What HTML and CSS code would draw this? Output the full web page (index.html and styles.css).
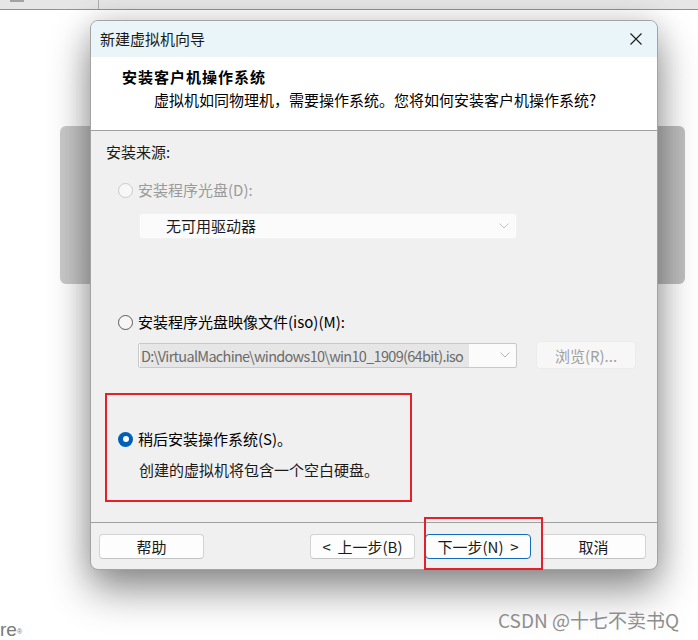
FILE: index.html
```html
<!DOCTYPE html>
<html lang="zh-CN">
<head>
<meta charset="utf-8">
<title>新建虚拟机向导</title>
<link rel="stylesheet" href="styles.css">
</head>
<body>
<div class="app">
  <div class="topbar"><span class="tb-handle"></span><span class="tb-divider"></span></div>
  <div class="stage"><div class="panel"></div></div>
  <div class="brand">re<span class="reg">®</span></div>
</div>

<div class="dialog">
  <div class="titlebar">
    <span class="title">新建虚拟机向导</span>
    <svg class="close" width="12" height="12" viewBox="0 0 12 12"><path d="M0.5 0.5 L11.5 11.5 M11.5 0.5 L0.5 11.5" stroke="#1a1a1a" stroke-width="1.1" fill="none"/></svg>
  </div>
  <div class="header">
    <div class="h-title">安装客户机操作系统</div>
    <div class="h-sub">虚拟机如同物理机，需要操作系统。您将如何安装客户机操作系统?</div>
  </div>
  <div class="body">
    <div class="label">安装来源:</div>
    <div class="radio-row r1">
      <span class="radio disabled"></span><span class="muted">安装程序光盘(D):</span>
    </div>
    <div class="select">
      <span>无可用驱动器</span>
      <svg width="10" height="6" viewBox="0 0 10 6"><path d="M0.5 0.5 L5 5 L9.5 0.5" stroke="#c4c4c4" fill="none"/></svg>
    </div>
    <div class="radio-row r2">
      <span class="radio off"></span><span>安装程序光盘映像文件(iso)(M):</span>
    </div>
    <div class="iso-row">
      <div class="iso-input">
        <span class="sel">D:\VirtualMachine\windows10\win10_1909(64bit).iso</span>
        <svg width="10" height="6" viewBox="0 0 10 6"><path d="M0.5 0.5 L5 5 L9.5 0.5" stroke="#b4b4b4" fill="none"/></svg>
      </div>
      <div class="browse">浏览(R)...</div>
    </div>
    <div class="mark">
      <div class="radio-row">
        <span class="radio on"></span><span>稍后安装操作系统(S)。</span>
      </div>
      <div class="note">创建的虚拟机将包含一个空白硬盘。</div>
    </div>
  </div>
  <div class="footer">
    <div class="btn w105">帮助</div>
    <div class="btn-group">
      <div class="btn w105">&lt;&nbsp; 上一步(B)</div>
      <div class="btn w106 primary">下一步(N)&nbsp; &gt;</div>
      <div class="btn w105">取消</div>
    </div>
  </div>
  <div class="mark2"></div>
</div>

<div class="watermark">CSDN @十七不卖书Q</div>
</body>
</html>
```

FILE: styles.css
```css
html, body {
  margin: 0;
  padding: 0;
  background: #ffffff;
  width: 698px;
  height: 640px;
  overflow: hidden;
  font-family: "Noto Sans CJK SC", "Noto Sans", sans-serif;
}

.app {
  display: flex;
  flex-direction: column;
  height: 640px;
}

.topbar {
  height: 9px;
  background: #e6e6e6;
  border-bottom: 1px solid #6d9cc3;
  display: flex;
  flex-shrink: 0;
}
.tb-handle {
  width: 14px;
  height: 2px;
  margin-left: 10px;
  background: #a2a2a2;
}
.tb-divider {
  width: 1px;
  height: 9px;
  margin-left: 74px;
  background: #b0b0b0;
}

.stage {
  padding: 116px 0 0 60px;
  flex-shrink: 0;
}
.panel {
  width: 625px;
  height: 158px;
  border-radius: 6px;
  background: linear-gradient(to right, #cacaca, #c0c0c0);
}

.brand {
  margin-top: auto;
  margin-bottom: 1px;
  height: 18px;
  font-family: "Liberation Sans", sans-serif;
  font-size: 19px;
  line-height: 18px;
  color: #7a7a7a;
}
.brand .reg {
  font-size: 7px;
  vertical-align: top;
  position: relative;
  top: 2px;
}

/* dialog window */
.dialog {
  position: absolute;
  left: 90px;
  top: 20px;
  width: 568px;
  height: 550px;
  box-sizing: border-box;
  border: 1px solid #a3a3a3;
  border-radius: 8px;
  background: #f0f0f0;
  display: flex;
  flex-direction: column;
  box-shadow: 0 20px 40px rgba(0, 0, 0, 0.44), 0 0 28px rgba(0, 0, 0, 0.12);
  font-size: 15px;
  color: #000;
}

.titlebar {
  height: 36px;
  flex-shrink: 0;
  background: #e9f5f8;
  border-radius: 7px 7px 0 0;
  display: flex;
  align-items: center;
  justify-content: space-between;
  padding: 0 15px 0 9px;
}
.title {
  line-height: 20px;
  color: #1a1a1a;
}
.close { display: block; }

.header {
  height: 63px;
  flex-shrink: 0;
  background: #ffffff;
  border-bottom: 1px solid #a0a0a0;
  padding: 10px 0 0 31px;
}
.h-title {
  font-weight: bold;
  letter-spacing: 1px;
  line-height: 20px;
}
.h-sub {
  margin: 3px 0 0 32px;
  line-height: 20px;
}

.body {
  height: 380px;
  flex-shrink: 0;
  padding: 11px 0 0 15px;
  border-bottom: 1px solid #a0a0a0;
  display: flex;
  flex-direction: column;
  align-items: flex-start;
}
.label {
  line-height: 20px;
  color: #1a1a1a;
}

.radio-row {
  display: flex;
  align-items: center;
  height: 20px;
  line-height: 20px;
  gap: 5px;
  margin-left: 12px;
}
.r1 { margin-top: 18px; }
.r2 { margin-top: 73px; }

.radio {
  width: 15px;
  height: 15px;
  box-sizing: border-box;
  border-radius: 50%;
  flex-shrink: 0;
}
.radio.disabled {
  border: 1px solid #cacaca;
  background: #f7f7f7;
}
.radio.off {
  border: 1px solid #5a5a5a;
  background: #f6f6f6;
}
.radio.on {
  background: #005fb8;
  display: flex;
  align-items: center;
  justify-content: center;
}
.radio.on::after {
  content: "";
  width: 6px;
  height: 6px;
  border-radius: 50%;
  background: #ffffff;
}
.muted { color: #9a9a9a; }

.select {
  margin: 13px 0 0 33px;
  width: 378px;
  height: 26px;
  box-sizing: border-box;
  background: #fbfbfb;
  border: 1px solid #f2f2f2;
  border-radius: 3px;
  display: flex;
  align-items: center;
  justify-content: space-between;
  padding: 0 7px 0 26px;
  line-height: 20px;
  color: #1a1a1a;
}

.iso-row {
  margin: 9px 0 0 32px;
  display: flex;
  align-items: center;
  gap: 19px;
  height: 28px;
}
.iso-input {
  width: 379px;
  height: 25px;
  box-sizing: border-box;
  border: 1px solid #c9c9c9;
  border-radius: 2px;
  background: #fbfbfb;
  display: flex;
  align-items: center;
  justify-content: space-between;
  padding: 0 6px 0 1px;
}
.sel {
  background: #e6e6e6;
  color: #6b6b6b;
  height: 23px;
  line-height: 23px;
  padding: 0 1px;
  font-size: 14.5px;
  letter-spacing: -0.7px;
  width: 329px;
  box-sizing: border-box;
  white-space: nowrap;
}
.browse {
  width: 100px;
  height: 28px;
  box-sizing: border-box;
  border: 1px solid #ececec;
  border-radius: 4px;
  background: #f7f7f7;
  color: #a0a0a0;
  display: flex;
  align-items: center;
  justify-content: center;
}

.mark {
  margin: 24px 0 0 -1px;
  width: 307px;
  height: 109px;
  box-sizing: border-box;
  border: 2px solid #e5202a;
  padding-top: 34px;
}
.mark .radio-row { margin-left: 11px; }
.note {
  margin: 11px 0 0 32px;
  line-height: 20px;
  color: #1a1a1a;
}

.footer {
  flex: 1;
  display: flex;
  align-items: flex-start;
  padding: 11px 11px 0 8px;
}
.btn-group {
  margin-left: auto;
  display: flex;
  gap: 10px;
}
.btn {
  height: 25px;
  box-sizing: border-box;
  border: 1px solid #d3d3d3;
  border-bottom-color: #c4c4c4;
  border-radius: 4px;
  background: #fdfdfd;
  display: flex;
  align-items: center;
  justify-content: center;
  color: #1a1a1a;
  line-height: 20px;
  white-space: nowrap;
}
.w105 { width: 105px; }
.w106 { width: 106px; }
.btn.primary {
  border: 1px solid #0f6cbd;
}

.mark2 {
  position: absolute;
  left: 333px;
  top: 496px;
  width: 119px;
  height: 53px;
  box-sizing: border-box;
  border: 2px solid #e5202a;
}

.watermark {
  position: absolute;
  left: 498px;
  top: 608px;
  font-size: 19px;
  line-height: 24px;
  color: #8e8e8e;
  text-shadow: 0 0 1px #ffffff;
  white-space: nowrap;
}
```
